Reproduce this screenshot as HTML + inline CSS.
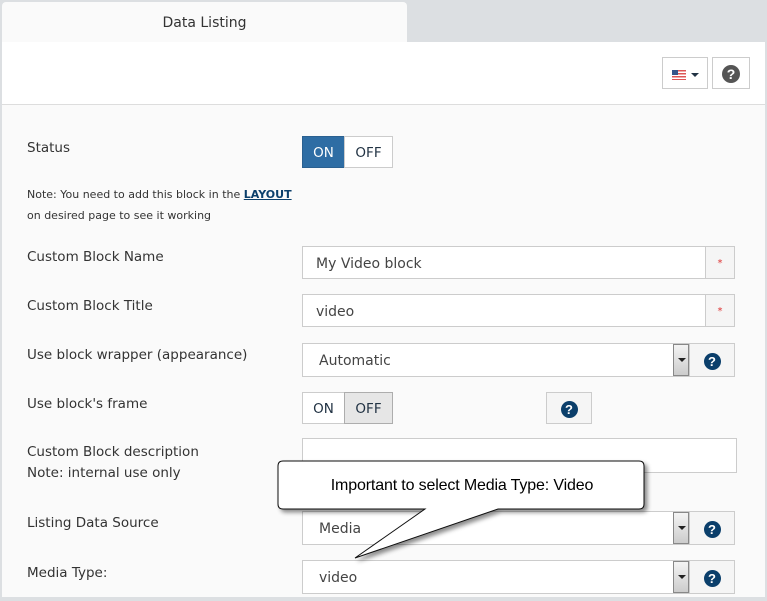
<!DOCTYPE html>
<html><head><style>
body{margin:0;width:767px;height:601px;background:#dcdfe2;font-family:"DejaVu Sans","Liberation Sans",sans-serif;position:relative;overflow:hidden;color:#333}
.a{position:absolute}
.lbl{position:absolute;left:27px;font-size:13.5px;color:#333}
.inp{position:absolute;left:302px;background:#fff;border:1px solid #ccc;box-sizing:border-box;font-size:14px;color:#444;padding-left:13px}
.add{position:absolute;background:#f5f5f5;border:1px solid #ccc;box-sizing:border-box;text-align:center}
.q{display:inline-block;width:17px;height:17px;border-radius:50%;background:#0b3f6b;color:#fff;font-weight:bold;font-size:13px;line-height:17px;text-align:center;font-family:"Liberation Sans",sans-serif}
.arr{position:absolute;width:16px;background:linear-gradient(#f4f4f4,#ccc);border:1px solid #888;box-sizing:border-box}
.arr:after{content:"";position:absolute;left:4px;top:13px;border-left:4px solid transparent;border-right:4px solid transparent;border-top:4px solid #222}
</style></head><body>
<div class="a" style="left:2px;top:2px;width:405px;height:41px;background:#fafafa;border-radius:4px 4px 0 0;text-align:center;line-height:43px;font-size:14px;color:#333">Data Listing</div>
<div class="a" style="left:2px;top:42px;width:763px;height:555px;background:#fafafa"></div>
<div class="a" style="left:2px;top:42px;width:763px;height:62px;background:#fff;border-bottom:1px solid #ddd"></div>
<div class="add" style="left:662px;top:57px;width:46px;height:32px;background:#fff">
 <div class="a" style="left:9px;top:12px;width:14px;height:10px;background:repeating-linear-gradient(#d55 0 1.5px,#fff 1.5px 3px)"></div>
 <div class="a" style="left:9px;top:12px;width:6px;height:5px;background:#33558a"></div>
 <div class="a" style="left:28px;top:15px;border-left:4px solid transparent;border-right:4px solid transparent;border-top:4px solid #234"></div>
</div>
<div class="add" style="left:712px;top:57px;width:38px;height:32px;background:#fff;padding-top:6px"><span class="q" style="background:#555;width:18px;height:18px;line-height:18px;font-size:14px">?</span></div>

<div class="lbl" style="top:140px">Status</div>
<div class="a" style="left:302px;top:136px;width:43px;height:32px;background:#2e6da4;border:1px solid #2a6090;box-sizing:border-box;color:#fff;font-size:13.5px;line-height:33px;text-align:center">ON</div>
<div class="a" style="left:344px;top:136px;width:49px;height:32px;background:#fff;border:1px solid #ccc;box-sizing:border-box;color:#234;font-size:13.5px;line-height:33px;text-align:center">OFF</div>
<div class="a" style="left:27px;top:188px;font-size:11px;color:#333">Note: You need to add this block in the <b style="text-decoration:underline;color:#0b3f6b">LAYOUT</b></div>
<div class="a" style="left:27px;top:209px;font-size:11px;color:#333">on desired page to see it working</div>

<div class="lbl" style="top:249px">Custom Block Name</div>
<div class="inp" style="top:246px;width:404px;height:33px;line-height:34px">My Video block</div>
<div class="add" style="left:705px;top:246px;width:30px;height:33px;color:#d33;font-size:10px;line-height:33px">*</div>

<div class="lbl" style="top:298px">Custom Block Title</div>
<div class="inp" style="top:294px;width:404px;height:33px;line-height:34px">video</div>
<div class="add" style="left:705px;top:294px;width:30px;height:33px;color:#d33;font-size:10px;line-height:33px">*</div>

<div class="lbl" style="top:347px">Use block wrapper (appearance)</div>
<div class="inp" style="top:343px;width:388px;height:34px;line-height:35px;padding-left:16px">Automatic</div>
<div class="arr" style="left:673px;top:344px;height:32px"></div>
<div class="add" style="left:689px;top:343px;width:46px;height:34px;padding-top:7px"><span class="q">?</span></div>

<div class="lbl" style="top:396px">Use block's frame</div>
<div class="a" style="left:302px;top:392px;width:43px;height:32px;background:#fff;border:1px solid #ccc;box-sizing:border-box;color:#234;font-size:13.5px;line-height:33px;text-align:center">ON</div>
<div class="a" style="left:344px;top:392px;width:49px;height:32px;background:#e6e6e6;border:1px solid #adadad;box-sizing:border-box;color:#234;font-size:13.5px;line-height:33px;text-align:center">OFF</div>
<div class="add" style="left:546px;top:392px;width:46px;height:32px;padding-top:6px"><span class="q">?</span></div>

<div class="lbl" style="top:442px;line-height:21px">Custom Block description<br>Note: internal use only</div>
<div class="inp" style="top:438px;width:435px;height:35px"></div>

<div class="lbl" style="top:515px">Listing Data Source</div>
<div class="inp" style="top:511px;width:388px;height:34px;line-height:35px;padding-left:16px">Media</div>
<div class="arr" style="left:673px;top:512px;height:32px"></div>
<div class="add" style="left:689px;top:511px;width:46px;height:34px;padding-top:7px"><span class="q">?</span></div>

<div class="lbl" style="top:565px">Media Type:</div>
<div class="inp" style="top:560px;width:388px;height:34px;line-height:35px;padding-left:16px">video</div>
<div class="arr" style="left:673px;top:561px;height:32px"></div>
<div class="add" style="left:689px;top:560px;width:46px;height:34px;padding-top:7px"><span class="q">?</span></div>

<svg class="a" style="left:0;top:0" width="767" height="601">
<defs><filter id="s"><feDropShadow dx="3" dy="3" stdDeviation="2" flood-color="#000" flood-opacity="0.45"/></filter></defs>
<path filter="url(#s)" d="M283 461 H639 Q644 461 644 466 V504 Q644 509 639 509 H498 L355 558 L425 509 H283 Q278 509 278 504 V466 Q278 461 283 461 Z" fill="#fff" stroke="#111" stroke-width="1"/>
<text x="462" y="490" text-anchor="middle" font-family="Liberation Sans" font-size="16" letter-spacing="-0.15" fill="#000">Important to select Media Type: Video</text>
</svg>
</body></html>
